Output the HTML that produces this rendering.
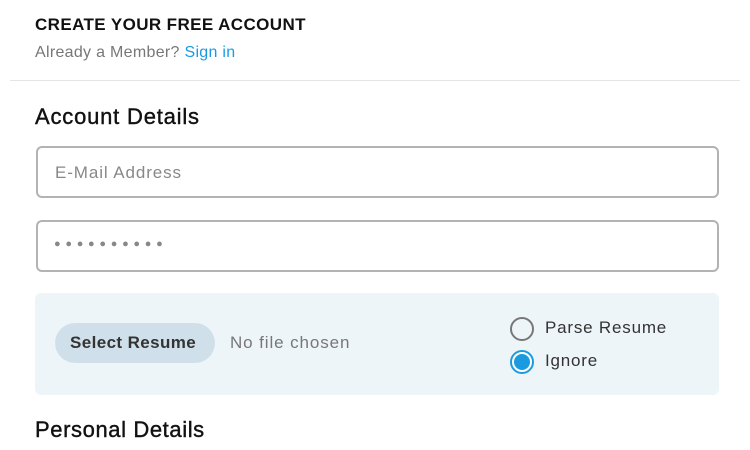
<!DOCTYPE html>
<html><head><style>
body{margin:0;width:750px;height:450px;overflow:hidden;background:#fff;font-family:"Liberation Sans",sans-serif;position:relative}
.a{position:absolute;white-space:nowrap}
.inp{position:absolute;left:36px;border:2px solid #b3b3b3;border-radius:6px;box-sizing:border-box}
</style></head><body>
<div class="a" style="left:35px;top:15px;font-size:17px;font-weight:bold;color:#111;letter-spacing:0.4px">CREATE YOUR FREE ACCOUNT</div>
<div class="a" style="left:35px;top:44px;font-size:16px;color:#777;letter-spacing:0.3px">Already a Member? <span style="color:#1a9be0">Sign in</span></div>
<div class="a" style="left:10px;top:80px;width:730px;height:1px;background:#e5e5e5"></div>
<div class="a" style="left:35px;top:104px;font-size:22px;color:#111;letter-spacing:0.8px;-webkit-text-stroke:0.4px #111">Account Details</div>
<div class="inp" style="top:146px;width:683px;height:52px"></div>
<div class="a" style="left:55px;top:163px;font-size:17px;color:#888;letter-spacing:0.9px">E-Mail Address</div>
<div class="inp" style="top:220px;width:683px;height:52px"></div>
<div class="a" style="left:54px;top:238px;font-size:11px;color:#888;letter-spacing:4.7px">●●●●●●●●●●</div>
<div class="a" style="left:35px;top:293px;width:684px;height:102px;background:#eef5f9;border-radius:6px"></div>
<div class="a" style="left:55px;top:323px;width:160px;height:40px;background:#d0e0ea;border-radius:20px"></div>
<div class="a" style="left:70px;top:333px;font-size:17px;font-weight:bold;color:#333;letter-spacing:0.4px">Select Resume</div>
<div class="a" style="left:230px;top:333px;font-size:17px;color:#777;letter-spacing:0.9px">No file chosen</div>
<div class="a" style="left:510px;top:317px;width:24px;height:24px;border:2px solid #777;border-radius:50%;box-sizing:border-box"></div>
<div class="a" style="left:545px;top:318px;font-size:17px;color:#333;letter-spacing:0.8px">Parse Resume</div>
<div class="a" style="left:510px;top:350px;width:24px;height:24px;border:2px solid #1a9be0;border-radius:50%;box-sizing:border-box;background:#fff"></div>
<div class="a" style="left:514px;top:354px;width:16px;height:16px;border-radius:50%;background:#1a9be0"></div>
<div class="a" style="left:545px;top:351px;font-size:17px;color:#333;letter-spacing:0.8px">Ignore</div>
<div class="a" style="left:35px;top:417px;font-size:22px;color:#111;letter-spacing:0.6px;-webkit-text-stroke:0.4px #111">Personal Details</div>
</body></html>
